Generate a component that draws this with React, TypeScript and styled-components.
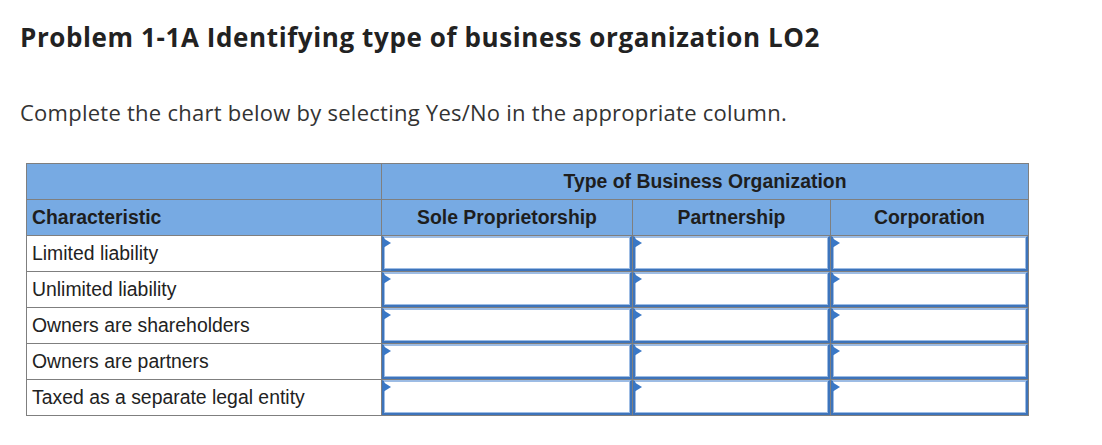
import styled, { createGlobalStyle } from "styled-components";

const GlobalStyle = createGlobalStyle`
	body {
		margin: 0;
		background: #fff;
	}
`;

const Page = styled.div`
	padding: 20px 20px 0 20px;
`;

const Title = styled.h1`
	font-family: "Open Sans", "Lato", sans-serif;
	font-weight: 700;
	font-size: 26px;
	line-height: 34px;
	color: #222;
	margin: 0;
	letter-spacing: 0.6px;
`;

const Instructions = styled.p`
	font-family: "Open Sans", "Lato", sans-serif;
	font-size: 22px;
	line-height: 28px;
	color: #333;
	margin: 44px 0 0 0;
	letter-spacing: 0.25px;
`;

const Chart = styled.table`
	border-collapse: collapse;
	margin: 37px 0 0 6px;
	table-layout: fixed;
`;

const HeadCell = styled.th<{ $left?: boolean }>`
	background: #77aae3;
	border: 1px solid #7f7f7f;
	height: 35px;
	padding: 0 5px;
	font-family: "Liberation Sans", Arial, sans-serif;
	font-size: 19.4px;
	font-weight: 700;
	text-align: ${(p) => (p.$left ? "left" : "center")};
	color: #1e1e1e;
`;

const LabelCell = styled.td`
	border: 1px solid #7f7f7f;
	height: 35px;
	padding: 0 5px;
	font-family: "Liberation Sans", Arial, sans-serif;
	font-size: 19.4px;
	color: #222;
	text-align: left;
`;

const PickCell = styled.td`
	border: 1px solid #7f7f7f;
	height: 35px;
	padding: 0;
	position: relative;
`;

const Picker = styled.div`
	box-sizing: border-box;
	height: 35px;
	border: 2px solid #3d74bb;
	border-top: 1px solid #9dbce4;
	box-shadow: inset 0 0 0 1px #9dbce4;
	background: #fff;
	position: relative;
`;

const Marker = styled.span`
	position: absolute;
	left: -1px;
	top: 1px;
	width: 0;
	height: 0;
	border-top: 5px solid transparent;
	border-bottom: 5px solid transparent;
	border-left: 8px solid #3a78c6;
`;

const rows = [
	"Limited liability",
	"Unlimited liability",
	"Owners are shareholders",
	"Owners are partners",
	"Taxed as a separate legal entity",
];

function App() {
	return (
		<Page>
			<GlobalStyle />
			<Title>Problem 1-1A Identifying type of business organization LO2</Title>
			<Instructions>
				Complete the chart below by selecting Yes/No in the appropriate column.
			</Instructions>
			<Chart>
				<colgroup>
					<col style={{ width: 355 }} />
					<col style={{ width: 251 }} />
					<col style={{ width: 198 }} />
					<col style={{ width: 198 }} />
				</colgroup>
				<thead>
					<tr>
						<HeadCell></HeadCell>
						<HeadCell colSpan={3}>Type of Business Organization</HeadCell>
					</tr>
					<tr>
						<HeadCell $left>Characteristic</HeadCell>
						<HeadCell>Sole Proprietorship</HeadCell>
						<HeadCell>Partnership</HeadCell>
						<HeadCell>Corporation</HeadCell>
					</tr>
				</thead>
				<tbody>
					{rows.map((r) => (
						<tr key={r}>
							<LabelCell>{r}</LabelCell>
							{[0, 1, 2].map((i) => (
								<PickCell key={i}>
									<Picker>
										<Marker />
									</Picker>
								</PickCell>
							))}
						</tr>
					))}
				</tbody>
			</Chart>
		</Page>
	);
}

export default App;
